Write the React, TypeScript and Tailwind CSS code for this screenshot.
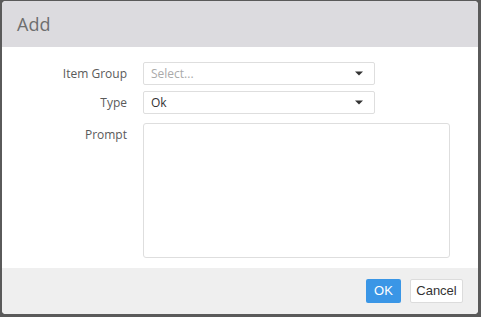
import React from 'react';

const Caret = () => (
    <svg width="8" height="5" viewBox="0 0 8 5" className="shrink-0">
        <path d="M0 0.5h8L4 4.5z" fill="#333" />
    </svg>
);

export default function App() {
    return (
        <div className="w-[481px] h-[317px] bg-[#5a5a5a] pt-[1px] pl-[2px] pr-[3px] pb-[3px]">
            <div className="w-full h-full bg-white rounded-[4px] overflow-hidden flex flex-col font-['Open_Sans',sans-serif]">
                <div className="h-[46px] shrink-0 bg-[#dcdbdf] flex items-center pl-[15px]">
                    <span className="text-[18px] text-[#6e6e6e]">Add</span>
                </div>

                <div className="flex-1 pt-[15px]">
                    <div className="grid grid-cols-[125px_1fr] gap-x-[16px] gap-y-[6px] pr-[28px] text-[12px] text-[#5a5a5a]">
                        <div className="text-right leading-[23px]">Item Group</div>
                        <div className="w-[232px] h-[23px] border border-[#dedede] rounded-[2px] flex items-center justify-between pl-[7px] pr-[11px]">
                            <span className="text-[#aaa]">Select...</span>
                            <Caret />
                        </div>

                        <div className="text-right leading-[23px]">Type</div>
                        <div className="w-[232px] h-[23px] border border-[#dedede] rounded-[2px] flex items-center justify-between pl-[7px] pr-[11px]">
                            <span className="text-[#333]">Ok</span>
                            <Caret />
                        </div>

                        <div className="text-right leading-[23px] mt-[3px]">Prompt</div>
                        <textarea className="w-[307px] h-[135px] mt-[3px] border border-[#dedede] rounded-[3px] resize-none outline-none" />
                    </div>
                </div>

                <div className="h-[46px] shrink-0 bg-[#efefef] flex items-center justify-end gap-[9px] pr-[15px] font-['Liberation_Sans',sans-serif] text-[13px]">
                    <button className="w-[35px] h-[24px] bg-[#3a96e6] text-white rounded-[2px]">OK</button>
                    <button className="w-[53px] h-[24px] bg-white text-[#333] border border-[#dcdcdc] rounded-[2px]">Cancel</button>
                </div>
            </div>
        </div>
    );
}
